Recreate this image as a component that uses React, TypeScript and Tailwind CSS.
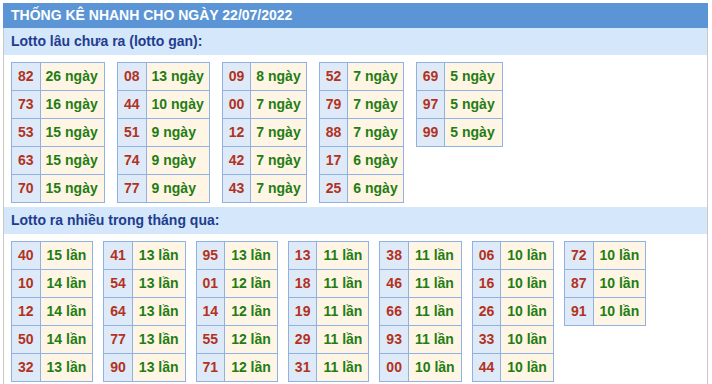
import React from "react";

type Row = [string, number];
type Block = { w?: string; rows: Row[] };

const ganTables: Block[] = [
  { w: "w-[94px]", rows: [["82", 26], ["73", 16], ["53", 15], ["63", 15], ["70", 15]] },
  { w: "w-[92px]", rows: [["08", 13], ["44", 10], ["51", 9], ["74", 9], ["77", 9]] },
  { w: "w-[85px]", rows: [["09", 8], ["00", 7], ["12", 7], ["42", 7], ["43", 7]] },
  { w: "w-[85px]", rows: [["52", 7], ["79", 7], ["88", 7], ["17", 6], ["25", 6]] },
  { w: "w-[87px]", rows: [["69", 5], ["97", 5], ["99", 5]] },
];

const hotTables: Block[] = [
  { rows: [["40", 15], ["10", 14], ["12", 14], ["50", 14], ["32", 13]] },
  { rows: [["41", 13], ["54", 13], ["64", 13], ["77", 13], ["90", 13]] },
  { rows: [["95", 13], ["01", 12], ["14", 12], ["55", 12], ["71", 12]] },
  { rows: [["13", 11], ["18", 11], ["19", 11], ["29", 11], ["31", 11]] },
  { rows: [["38", 11], ["46", 11], ["66", 11], ["93", 11], ["00", 10]] },
  { rows: [["06", 10], ["16", 10], ["26", 10], ["33", 10], ["44", 10]] },
  { rows: [["72", 10], ["87", 10], ["91", 10]] },
];

function StatTable({ block, unit, tight }: { block: Block; unit: string; tight?: boolean }) {
  return (
    <table className={`border-collapse border border-[#8fb1e3] ${block.w ?? ""}`}>
      <tbody>
        {block.rows.map(([num, count]) => (
          <tr key={num}>
            <td className="w-[28px] border border-[#8fb1e3] bg-[#dfeaf8] px-[6px] py-0 text-center leading-[27px] text-[#b2321e]">
              {num}
            </td>
            <td
              className={`border border-[#8fb1e3] bg-[#fff5e4] py-0 leading-[27px] whitespace-nowrap text-[#1f7d14] ${
                tight ? "px-[5px]" : "px-[6px]"
              }`}
            >
              {count} {unit}
            </td>
          </tr>
        ))}
      </tbody>
    </table>
  );
}

function SubHeader({ children }: { children: React.ReactNode }) {
  return (
    <div className="h-[27px] bg-[#d5e7fa] px-[7px] text-[14px] font-bold leading-[27px] text-[#1f3d8e]">
      {children}
    </div>
  );
}

export default function App() {
  return (
    <div className="h-[384px] overflow-hidden bg-white p-[3px] font-['Liberation_Sans',Arial,sans-serif]">
      <div className="w-[705px] border-x border-[#c8c8c8]">
        <div className="-mx-px h-[25px] bg-[#5b95d6] px-[8px] text-[14px] font-bold leading-[25px] text-white">
          THỐNG KÊ NHANH CHO NGÀY 22/07/2022
        </div>
        <SubHeader>Lotto lâu chưa ra (lotto gan):</SubHeader>
        <div className="flex gap-[12px] px-[7px] pt-[7px] pb-[4px] text-[14px] font-bold">
          {ganTables.map((block, i) => (
            <div key={i} className="self-start">
              <StatTable block={block} unit="ngày" tight />
            </div>
          ))}
        </div>
        <SubHeader>Lotto ra nhiều trong tháng qua:</SubHeader>
        <div className="flex gap-[10px] px-[7px] pt-[7px] pb-[4px] text-[14px] font-bold">
          {hotTables.map((block, i) => (
            <div key={i} className="self-start">
              <StatTable block={block} unit="lần" />
            </div>
          ))}
        </div>
      </div>
    </div>
  );
}
